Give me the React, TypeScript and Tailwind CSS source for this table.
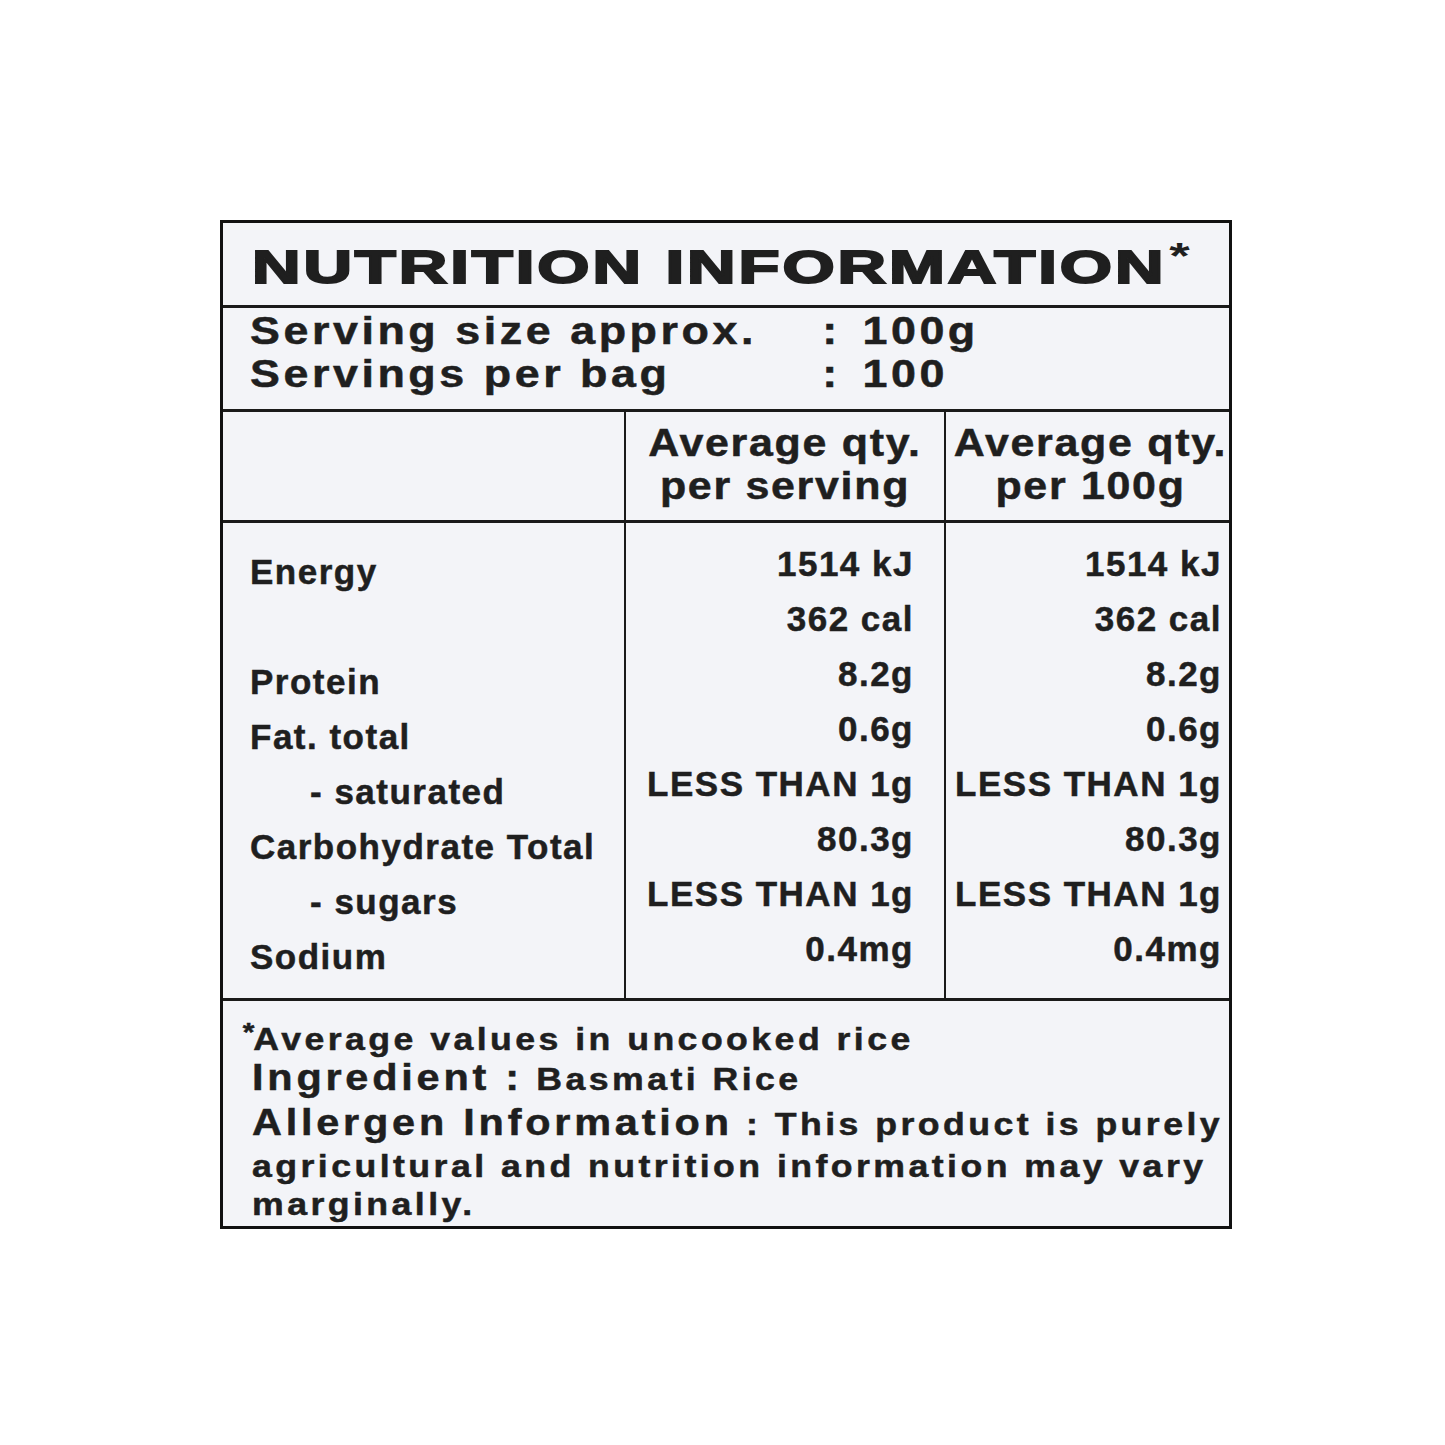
import React from "react";

const labels = [
  { text: "Energy", sub: false },
  { text: "", sub: false },
  { text: "Protein", sub: false },
  { text: "Fat. total", sub: false },
  { text: "- saturated", sub: true },
  { text: "Carbohydrate Total", sub: false },
  { text: "- sugars", sub: true },
  { text: "Sodium", sub: false },
];

const perServing = ["1514 kJ", "362 cal", "8.2g", "0.6g", "LESS THAN 1g", "80.3g", "LESS THAN 1g", "0.4mg"];
const per100g = ["1514 kJ", "362 cal", "8.2g", "0.6g", "LESS THAN 1g", "80.3g", "LESS THAN 1g", "0.4mg"];

const ValueColumn = ({ values, className }: { values: string[]; className: string }) => (
  <div className={`border-l-2 border-[#1a1a1a] pt-[13px] text-right ${className}`}>
    {values.map((v, i) => (
      <div key={i} className="h-[55px] whitespace-nowrap">
        {v}
      </div>
    ))}
  </div>
);

export default function App() {
  return (
    <div className="min-h-screen bg-white pl-[220px] pt-[220px] font-['Liberation_Sans',Arial,sans-serif] text-[#1f1f1f] [-webkit-text-stroke:0.5px_#1f1f1f]">
      <div className="flex h-[1009px] w-[1012px] flex-col overflow-hidden border-[3px] border-[#111] bg-[#f3f4f8]">
        {/* Title */}
        <div className="h-[85px] shrink-0 border-b-[3px] border-[#1a1a1a] pl-[29px] pt-[21px]">
          <div className="origin-left scale-x-[1.46] whitespace-nowrap text-[46px] font-bold leading-[46px] tracking-[2px] [-webkit-text-stroke:2px_#1f1f1f]">
            NUTRITION INFORMATION
            <span className="ml-[2px] align-[14px] text-[36px] leading-[0] tracking-[0px] [-webkit-text-stroke:0px]">*</span>
          </div>
        </div>

        {/* Serving info */}
        <div className="h-[104px] shrink-0 border-b-[3px] border-[#1a1a1a] pl-[27px] pt-[2px] text-[38px] font-bold leading-[43px] tracking-[3px]">
          <div className="origin-left scale-x-[1.18]">
            <div className="flex whitespace-nowrap">
              <span className="w-[485px]">Serving size approx.</span>
              <span className="w-[34px]">:</span>
              <span>100g</span>
            </div>
            <div className="flex whitespace-nowrap">
              <span className="w-[485px]">Servings per bag</span>
              <span className="w-[34px]">:</span>
              <span>100</span>
            </div>
          </div>
        </div>

        {/* Column headers */}
        <div className="grid h-[111px] shrink-0 grid-cols-[401px_320px_285px] border-b-[3px] border-[#1a1a1a] text-[38px] font-bold leading-[43px] tracking-[1.5px]">
          <div />
          <div className="whitespace-nowrap border-l-2 border-[#1a1a1a] pt-[10px] text-center">
            <div className="scale-x-[1.13]">
              Average qty.
              <br />
              per serving
            </div>
          </div>
          <div className="whitespace-nowrap border-l-2 border-[#1a1a1a] pl-[6px] pt-[10px] text-center">
            <div className="scale-x-[1.13]">
              Average qty.
              <br />
              per 100g
            </div>
          </div>
        </div>

        {/* Nutrient rows */}
        <div className="grid h-[478px] shrink-0 grid-cols-[401px_320px_285px] border-b-[3px] border-[#1a1a1a] text-[35px] font-bold leading-[55px] tracking-[1.5px]">
          <div className="pl-[27px] pt-[21px]">
            {labels.map((l, i) => (
              <div key={i} className={`h-[55px] whitespace-nowrap ${l.sub ? "pl-[60px]" : ""}`}>
                {l.text}
              </div>
            ))}
          </div>
          <ValueColumn values={perServing} className="pr-[30px]" />
          <ValueColumn values={per100g} className="pr-[7px]" />
        </div>

        {/* Footer */}
        <div className="flex-1 pl-[29px] pt-[21px] text-[31px] font-bold tracking-[3px]">
          <div className="origin-left scale-x-[1.15]">
            <div className="-ml-[8px] whitespace-nowrap leading-[36px]">
              <span className="mr-[-1px] align-[9px] text-[26px] leading-[0] tracking-[0px]">*</span>
              Average values in uncooked rice
            </div>
            <div className="whitespace-nowrap leading-[40px]">
              <span className="text-[36px] tracking-[3.3px]">Ingredient :</span> Basmati Rice
            </div>
            <div className="whitespace-nowrap leading-[46px]">
              <span className="text-[36px] tracking-[3.3px]">Allergen Information</span> : This product is purely
            </div>
            <div className="whitespace-nowrap leading-[38px]">agricultural and nutrition information may vary</div>
            <div className="whitespace-nowrap leading-[38px]">marginally.</div>
          </div>
        </div>
      </div>
    </div>
  );
}
